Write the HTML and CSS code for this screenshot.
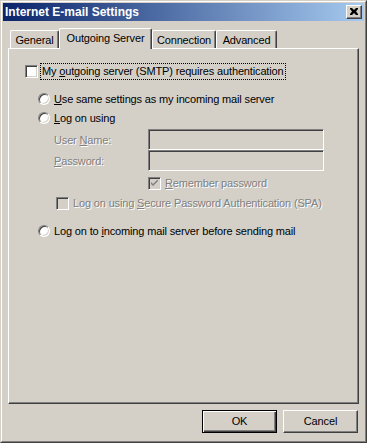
FILE: index.html
```html
<!DOCTYPE html>
<html>
<head>
<meta charset="utf-8">
<link rel="stylesheet" href="styles.css">
</head>
<body>
<div class="window">
  <div class="frame">
    <div class="titlebar">
      <span class="title">Internet E-mail Settings</span>
      <span class="close">
        <svg width="8" height="7" viewBox="0 0 8 7"><path d="M0 0h2l2 2 2-2h2v1L6 3.5 8 6v1H6L4 5 2 7H0V6l2-2.5L0 1z" fill="#000"/></svg>
      </span>
    </div>
    <div class="content">
      <div class="tabs">
        <div class="tab w1">General</div>
        <div class="tab sel">Outgoing Server</div>
        <div class="tab w3">Connection</div>
        <div class="tab w4">Advanced</div>
      </div>
      <div class="panel">
        <div class="row r1">
          <span class="cb"></span>
          <span class="focus">My <u>o</u>utgoing server (SMTP) requires authentication</span>
        </div>
        <div class="row r2 ind1">
          <span class="radio"></span>
          <span class="lbl"><u>U</u>se same settings as my incoming mail server</span>
        </div>
        <div class="row r3 ind1">
          <span class="radio"></span>
          <span class="lbl"><u>L</u>og on using</span>
        </div>
        <div class="row field f1">
          <span class="dis flabel">User <u>N</u>ame:</span>
          <span class="input"></span>
        </div>
        <div class="row field f2">
          <span class="dis flabel"><u>P</u>assword:</span>
          <span class="input"></span>
        </div>
        <div class="row r4">
          <span class="cb off">
            <svg width="7" height="7" viewBox="0 0 7 7"><path d="M0 2l2 2 5-5v2L2 6 0 4z" fill="#808080"/></svg>
          </span>
          <span class="dis lbl2"><u>R</u>emember password</span>
        </div>
        <div class="row r5">
          <span class="cb off"></span>
          <span class="dis lbl2">Log on using <u>S</u>ecure Password Authentication (SPA)</span>
        </div>
        <div class="row r6 ind1">
          <span class="radio"></span>
          <span class="lbl">Log on to <u>i</u>ncoming mail server before sending mail</span>
        </div>
      </div>
      <div class="buttons">
        <div class="btn default"><span class="btn-in">OK</span></div>
        <div class="btn"><span class="btn-in">Cancel</span></div>
      </div>
    </div>
  </div>
</div>
</body>
</html>
```

FILE: styles.css
```css
* { box-sizing: border-box; }
html, body { margin: 0; padding: 0; }
body {
  background: #d4d0c8;
  font-family: "Liberation Sans", Arial, sans-serif;
  font-size: 11px;
  letter-spacing: -0.15px;
  color: #000;
}
.window {
  width: 367px;
  height: 443px;
  border: 1px solid;
  border-color: #d4d0c8 #404040 #404040 #d4d0c8;
  background: #d4d0c8;
}
.frame {
  height: 100%;
  border: 1px solid;
  border-color: #fff #808080 #808080 #fff;
  padding: 1px;
  display: flex;
  flex-direction: column;
}
.titlebar {
  height: 18px;
  background: linear-gradient(to right, #0a246a, #a6caf0);
  display: flex;
  align-items: center;
  justify-content: space-between;
  padding: 0 2px 0 2px;
}
.title {
  color: #fff;
  font-weight: bold;
  font-size: 12px;
  letter-spacing: 0;
}
.close {
  width: 16px;
  height: 14px;
  background: #d4d0c8;
  border: 1px solid;
  border-color: #fff #404040 #404040 #fff;
  box-shadow: inset -1px -1px 0 #808080;
  display: flex;
  align-items: center;
  justify-content: center;
  padding-bottom: 1px;
}
.close svg { display: block; }
.content {
  flex: 1;
  padding: 7px 5px 0 5px;
  display: flex;
  flex-direction: column;
}
.tabs {
  height: 20px;
  display: flex;
  align-items: flex-end;
  padding-left: 2px;
  position: relative;
  z-index: 1;
}
.tab {
  height: 18px;
  border-top: 1px solid #fff;
  border-left: 1px solid #fff;
  border-right: 1px solid #404040;
  box-shadow: inset -1px 0 0 #808080;
  border-radius: 2px 2px 0 0;
  display: flex;
  align-items: center;
  justify-content: center;
  padding-top: 1px;
  background: #d4d0c8;
}
.w1 { width: 49px; }
.w3 { width: 64px; }
.w4 { width: 61px; }
.tab.sel {
  width: 93px;
  height: 21px;
  margin-bottom: -1px;
  padding-top: 0;
  padding-bottom: 3px;
}
.panel {
  height: 356px;
  border: 1px solid;
  border-color: #fff #404040 #404040 #fff;
  box-shadow: inset -1px -1px 0 #808080;
  padding-top: 14px;
  display: flex;
  flex-direction: column;
}
.row {
  display: flex;
  align-items: center;
  height: 17px;
}
.r1 { padding-left: 16px; }
.r2 { margin-top: 10px; }
.r3 { margin-top: 2px; }
.ind1 { padding-left: 29px; }
.cb {
  width: 13px;
  height: 13px;
  flex: none;
  background: #fff;
  border: 1px solid;
  border-color: #808080 #fff #fff #808080;
  box-shadow: inset 1px 1px 0 #404040, inset -1px -1px 0 #d4d0c8;
  display: flex;
  align-items: center;
  justify-content: center;
}
.cb.off { background: #d4d0c8; }
.cb svg { display: block; }
.focus {
  margin-left: 3px;
  padding: 1px;
  outline: 1px dotted #000;
  outline-offset: 0;
  line-height: 13px;
}
.radio {
  width: 12px;
  height: 12px;
  flex: none;
  border-radius: 50%;
  background: #fff;
  border: 1px solid;
  border-color: #808080 #fff #fff #808080;
  box-shadow: inset 1px 1px 0 #404040, inset -1px -1px 0 #d4d0c8;
}
.lbl { margin-left: 4px; }
.field {
  height: 21px;
  padding-left: 45px;
}
.f1 { margin-top: 3px; }
.f2 { margin-top: 0; }
.flabel { width: 94px; }
.dis {
  color: #808080;
  text-shadow: 1px 1px 0 #fff;
}
.input {
  width: 176px;
  height: 21px;
  border: 1px solid;
  border-color: #808080 #fff #fff #808080;
  box-shadow: inset 1px 1px 0 #404040, inset -1px -1px 0 #d4d0c8;
  background: #d4d0c8;
}
.r4 { margin-top: 4px; padding-left: 139px; height: 16px; }
.r5 { margin-top: 4px; padding-left: 47px; height: 16px; }
.lbl2 { margin-left: 4px; }
.r6 { margin-top: 11px; }
.buttons {
  display: flex;
  justify-content: flex-end;
  gap: 6px;
  margin-top: 6px;
  margin-right: 1px;
}
.btn {
  width: 75px;
  height: 23px;
  border: 1px solid;
  border-color: #fff #404040 #404040 #fff;
  box-shadow: inset -1px -1px 0 #808080;
  display: flex;
  align-items: center;
  justify-content: center;
}
.btn.default {
  border: 1px solid #000;
  box-shadow: inset 1px 1px 0 #fff, inset -1px -1px 0 #404040, inset -2px -2px 0 #808080;
}
.btn-in { line-height: 13px; }
```
